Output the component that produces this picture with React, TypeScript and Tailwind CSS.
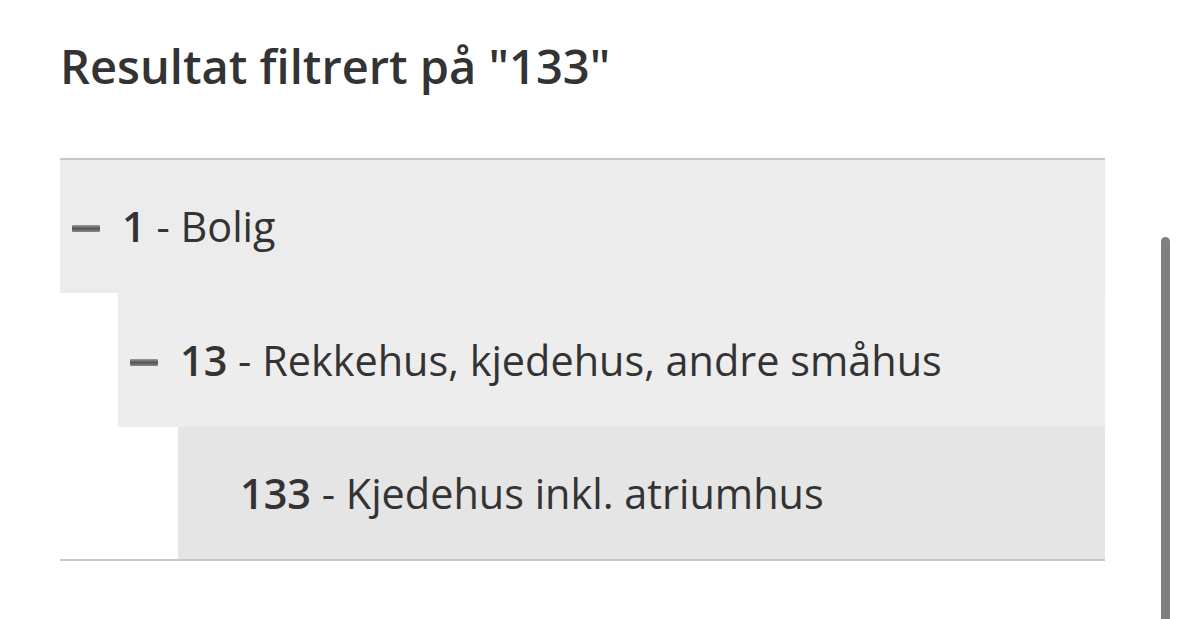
import React from "react";

const Minus = () => (
  <span className="inline-block w-[28px] h-[7px] rounded-[1px] bg-gradient-to-b from-[#9a9a9a] via-[#555] to-[#8a8a8a] mr-[22px] mt-[4px]" />
);

export default function App() {
  return (
    <div className="relative w-[1179px] h-[619px] bg-white overflow-hidden text-[#333]" style={{ fontFamily: '"Open Sans", sans-serif' }}>
      <div className="pl-[60px] pr-[74px] pt-[36px]">
        <h1 className="text-[47px] font-semibold leading-[60px]">Resultat filtrert på "133"</h1>
        <div className="mt-[62px] border-t-2 border-b-2 border-[#c8c8c8]">
          <div className="flex items-center h-[133px] bg-[#ececec] pl-[12px] text-[41.4px]">
            <Minus />
            <span><b className="font-semibold">1</b> - Bolig</span>
          </div>
          <div className="pl-[58px]">
            <div className="flex items-center h-[134px] bg-[#ededed] pl-[12px] text-[41.4px]">
              <Minus />
              <span><b className="font-semibold">13</b> - Rekkehus, kjedehus, andre småhus</span>
            </div>
          </div>
          <div className="pl-[118px]">
            <div className="flex items-center h-[132px] bg-[#e5e5e5] pl-[62px] text-[41.4px]">
              <span><b className="font-semibold">133</b> - Kjedehus inkl. atriumhus</span>
            </div>
          </div>
        </div>
      </div>
      <div className="absolute left-[1161px] top-[237px] w-[9px] h-[400px] rounded-t-full bg-[#808080]" />
    </div>
  );
}
